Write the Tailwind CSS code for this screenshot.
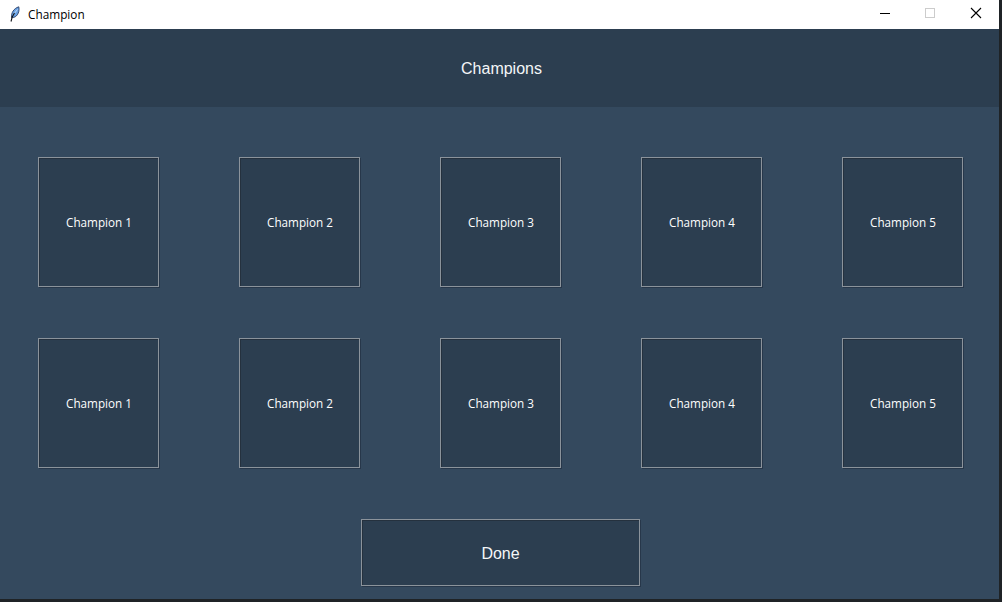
<!DOCTYPE html>
<html lang="en">
<head>
    <meta charset="UTF-8">
    <script src="https://cdn.jsdelivr.net/npm/@tailwindcss/browser@4"></script>
    <title>Champion</title>
</head>
<body class="w-[1002px] h-[602px] overflow-hidden bg-[#1f2326] font-['Open_Sans',sans-serif]">

    <div class="w-[999px] h-[599px] bg-[#34495e] flex flex-col">

        <!-- Title bar -->
        <div class="h-[29px] bg-white flex items-center text-black">
            <svg class="ml-[10px] mb-[2px] w-[10px] h-[16px]" viewBox="0 0 10 16">
                <path d="M1.5 11.5 C1.2 7 3.5 2.5 8.8 0.8 C9.6 4 8.6 8 6.3 10 C5 11.2 3.2 11.6 1.5 11.5 Z" fill="#6aa2e4" stroke="#2b3f66" stroke-width="0.9"/>
                <path d="M3.5 8.5 L7.5 3.5" stroke="#dbe8f8" stroke-width="0.8"/>
                <path d="M1 15.5 L2.2 11 L4.5 7" stroke="#0c0f14" stroke-width="1.1" fill="none"/>
            </svg>
            <span class="ml-[8px] text-[11.8px] leading-none">Champion</span>
            <div class="ml-auto flex items-center">
                <svg class="w-[46px] h-[29px]" viewBox="0 0 46 29"><path d="M18 13.5H28" stroke="#000"/></svg>
                <svg class="w-[46px] h-[29px] ml-[-1px]" viewBox="0 0 46 29"><rect x="18.5" y="8.5" width="9" height="9" fill="none" stroke="#ccc"/></svg>
                <svg class="w-[46px] h-[29px]" viewBox="0 0 46 29"><path d="M18 8L28 18M28 8L18 18" stroke="#000" stroke-width="1.1"/></svg>
            </div>
        </div>

        <!-- Header -->
        <div class="h-[78px] bg-[#2c3e50] flex items-center justify-center pt-[2px] pl-[4px] text-[#f4f6f8] font-['Liberation_Sans',sans-serif] text-[16px]">Champions</div>

        <!-- Champion grid -->
        <div class="pt-[50px] pl-[38px] pr-[36px] flex flex-col gap-[51px]">
            <div class="flex justify-between">
                <button class="w-[121px] h-[130px] pt-[2px] pl-[1px] bg-[#2c3e50] border border-[#8b939b] shadow-[inset_1px_1px_0_#25313e,1px_1px_0_#27374a] text-white text-[11.7px]">Champion 1</button>
                <button class="w-[121px] h-[130px] pt-[2px] pl-[1px] bg-[#2c3e50] border border-[#8b939b] shadow-[inset_1px_1px_0_#25313e,1px_1px_0_#27374a] text-white text-[11.7px]">Champion 2</button>
                <button class="w-[121px] h-[130px] pt-[2px] pl-[1px] bg-[#2c3e50] border border-[#8b939b] shadow-[inset_1px_1px_0_#25313e,1px_1px_0_#27374a] text-white text-[11.7px]">Champion 3</button>
                <button class="w-[121px] h-[130px] pt-[2px] pl-[1px] bg-[#2c3e50] border border-[#8b939b] shadow-[inset_1px_1px_0_#25313e,1px_1px_0_#27374a] text-white text-[11.7px]">Champion 4</button>
                <button class="w-[121px] h-[130px] pt-[2px] pl-[1px] bg-[#2c3e50] border border-[#8b939b] shadow-[inset_1px_1px_0_#25313e,1px_1px_0_#27374a] text-white text-[11.7px]">Champion 5</button>
            </div>
            <div class="flex justify-between">
                <button class="w-[121px] h-[130px] pt-[2px] pl-[1px] bg-[#2c3e50] border border-[#8b939b] shadow-[inset_1px_1px_0_#25313e,1px_1px_0_#27374a] text-white text-[11.7px]">Champion 1</button>
                <button class="w-[121px] h-[130px] pt-[2px] pl-[1px] bg-[#2c3e50] border border-[#8b939b] shadow-[inset_1px_1px_0_#25313e,1px_1px_0_#27374a] text-white text-[11.7px]">Champion 2</button>
                <button class="w-[121px] h-[130px] pt-[2px] pl-[1px] bg-[#2c3e50] border border-[#8b939b] shadow-[inset_1px_1px_0_#25313e,1px_1px_0_#27374a] text-white text-[11.7px]">Champion 3</button>
                <button class="w-[121px] h-[130px] pt-[2px] pl-[1px] bg-[#2c3e50] border border-[#8b939b] shadow-[inset_1px_1px_0_#25313e,1px_1px_0_#27374a] text-white text-[11.7px]">Champion 4</button>
                <button class="w-[121px] h-[130px] pt-[2px] pl-[1px] bg-[#2c3e50] border border-[#8b939b] shadow-[inset_1px_1px_0_#25313e,1px_1px_0_#27374a] text-white text-[11.7px]">Champion 5</button>
            </div>
        </div>

        <!-- Done -->
        <div class="pt-[51px] pl-[361px]">
            <button class="w-[279px] h-[67px] pt-[2px] bg-[#2c3e50] border border-[#8b939b] shadow-[inset_1px_1px_0_#25313e,1px_1px_0_#27374a] text-[#f4f6f8] font-['Liberation_Sans',sans-serif] text-[16px]">Done</button>
        </div>
    </div>

</body>
</html>
